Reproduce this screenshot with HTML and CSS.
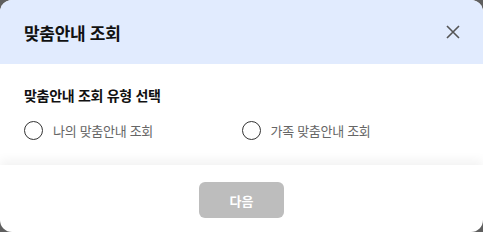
FILE: index.html
```html
<!DOCTYPE html>
<html lang="ko">
<head>
<meta charset="utf-8">
<link rel="stylesheet" href="styles.css">
</head>
<body>
<div class="dialog">
  <div class="header">
    <h1 class="title">맞춤안내 조회</h1>
    <button class="close" aria-label="닫기">
      <svg width="16" height="16" viewBox="0 0 16 16"><path d="M2 2L14 14M14 2L2 14" stroke="#555" stroke-width="1.6" fill="none"/></svg>
    </button>
  </div>
  <div class="content">
    <h2 class="subtitle">맞춤안내 조회 유형 선택</h2>
    <div class="options">
      <label class="option"><span class="radio"></span><span class="label">나의 맞춤안내 조회</span></label>
      <label class="option"><span class="radio"></span><span class="label">가족 맞춤안내 조회</span></label>
    </div>
  </div>
  <div class="footer">
    <button class="next">다음</button>
  </div>
</div>
</body>
</html>
```
FILE: styles.css
```css
html, body { margin: 0; padding: 0; }
body {
  width: 483px; height: 232px; overflow: hidden;
  background: #5f5f5f;
  font-family: "Noto Sans CJK KR", "Noto Sans", sans-serif;
}
.dialog {
  width: 483px; height: 232px;
  background: #fff;
  border-radius: 12px;
  overflow: hidden;
  display: flex; flex-direction: column;
}
.header {
  height: 64px; flex: none; box-sizing: border-box;
  background: #e1ebfe;
  display: flex; align-items: center; justify-content: space-between;
  padding: 0 22px 0 24px;
}
.title { margin: 0; font-size: 17px; font-weight: 700; color: #111; letter-spacing: -0.3px; }
.close { border: 0; background: none; padding: 0; width: 16px; height: 16px; display: flex; }
.content { padding: 19px 24px 0; height: 101px; flex: none; box-sizing: border-box; }
.subtitle { margin: 0; font-size: 14px; font-weight: 700; color: #111; line-height: 24px; letter-spacing: -0.3px; }
.options { display: flex; margin-top: 14px; }
.option { display: flex; align-items: center; gap: 10px; width: 219px; }
.radio {
  border: 1.3px solid #333; border-radius: 50%;
  box-sizing: border-box; width: 19px; height: 19px;
}
.label { font-size: 13px; color: #666; letter-spacing: -0.3px; }
.footer {
  flex: 1;
  box-shadow: 0 -5px 10px rgba(0,0,0,0.05);
  display: flex; justify-content: center; align-items: flex-start;
  padding-top: 17px;
  position: relative;
}
.next {
  width: 85px; height: 36px;
  border: 0; border-radius: 6px;
  background: #bdbdbd; color: #fff;
  font-family: inherit; font-size: 13px; font-weight: 700;
}
```
